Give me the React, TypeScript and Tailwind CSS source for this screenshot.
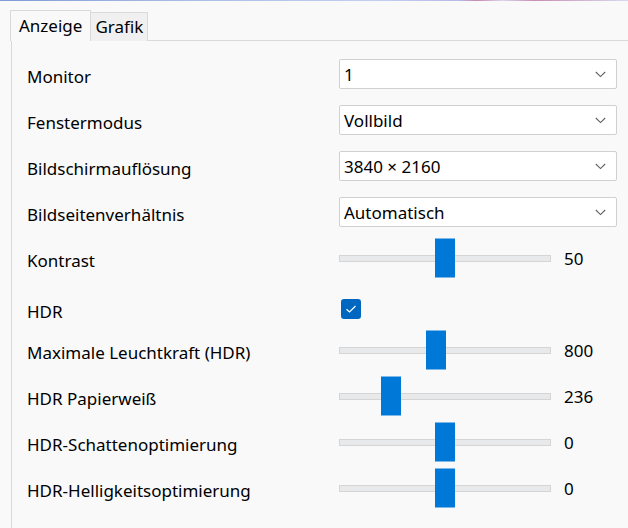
import React from 'react'

const FONT = "font-['Noto_Sans',_'Open_Sans',_sans-serif]"

interface ComboRow {
  kind: 'combo'
  label: string
  value: string
}

interface SliderRow {
  kind: 'slider'
  label: string
  value: string
  thumb: number // thumb left offset on the track, px
}

interface CheckRow {
  kind: 'check'
  label: string
}

type Row = ComboRow | SliderRow | CheckRow

const ROWS: Row[] = [
  { kind: 'combo', label: 'Monitor', value: '1' },
  { kind: 'combo', label: 'Fenstermodus', value: 'Vollbild' },
  { kind: 'combo', label: 'Bildschirmauflösung', value: '3840 × 2160' },
  { kind: 'combo', label: 'Bildseitenverhältnis', value: 'Automatisch' },
  { kind: 'slider', label: 'Kontrast', value: '50', thumb: 95 },
  { kind: 'check', label: 'HDR' },
  { kind: 'slider', label: 'Maximale Leuchtkraft (HDR)', value: '800', thumb: 86 },
  { kind: 'slider', label: 'HDR Papierweiß', value: '236', thumb: 41 },
  { kind: 'slider', label: 'HDR-Schattenoptimierung', value: '0', thumb: 95 },
  { kind: 'slider', label: 'HDR-Helligkeitsoptimierung', value: '0', thumb: 95 },
]

function Chevron() {
  return (
    <svg width="11" height="7" viewBox="0 0 11 7" className="shrink-0">
      <path d="M0.8 1 L5.5 5.6 L10.2 1" fill="none" stroke="#606060" strokeWidth="1.1" />
    </svg>
  )
}

function Combo({ value }: { value: string }) {
  return (
    <div className="w-[278px] h-[30px] flex items-center justify-between pl-[4px] pr-[10px] bg-white border border-[#d0d0d0] rounded-[2px]">
      <span className="text-[17px] leading-none text-black">{value}</span>
      <Chevron />
    </div>
  )
}

function Slider({ value, thumb }: { value: string; thumb: number }) {
  return (
    <div className="flex items-center">
      <div className="relative w-[212px] h-[7px] bg-[#e7e9ea] border border-[#d5d5d5]">
        {/* thumb sits over the track */}
        <div
          className="absolute top-1/2 -translate-y-1/2 w-[20px] h-[39px] bg-[#0078d7]"
          style={{ left: thumb }}
        />
      </div>
      <span className="ml-[13px] text-[17px] leading-none text-black">{value}</span>
    </div>
  )
}

function Checkbox() {
  return (
    <div className="ml-[2px] w-[20px] h-[20px] rounded-[3px] bg-[#0067c0] flex items-center justify-center">
      <svg width="12" height="10" viewBox="0 0 12 10">
        <path d="M1.5 5.2 L4.5 8 L10.5 2" fill="none" stroke="white" strokeWidth="1.2" />
      </svg>
    </div>
  )
}

export default function App() {
  return (
    <div className={`${FONT} w-[628px] h-[528px] overflow-hidden bg-[#f9f9f9] text-black relative`}>
      {/* ── Desktop sliver at top ───────────────────────────── */}
      <div className="h-[1px] bg-[linear-gradient(90deg,#7f9bd6_0%,#a9bde6_30%,#c4cff0_60%,#b7b9e8_73%,#c78ab0_76%,#dcd4ec_80%,#c88fb4_85%,#d8d8ee_100%)]" />

      {/* ── Tabs ───────────────────────────────────────────── */}
      <div className="flex items-end h-[31px] pl-[10px] mt-[9px] -mb-[1px]">
        <div className="h-[31px] px-[8px] pt-[2px] border border-b-0 border-[#d9d9d9] bg-[#f9f9f9] text-[17px] relative z-10 flex items-start">
          Anzeige
        </div>
        <div className="h-[29px] px-[4px] border border-l-0 border-b-0 border-[#dadada] bg-[#f0f0f0] text-[17px] leading-[28px]">
          Grafik
        </div>
        <div className="flex-1" />
      </div>

      {/* ── Pane ───────────────────────────────────────────── */}
      <div className="ml-[11px] border-l border-t border-[#dadada] pt-[10px] pl-[15px] h-[490px]">
        {ROWS.map(row => (
          <div
            key={row.label}
            className={`flex h-[46px] items-center ${row.kind === 'check' ? 'pt-[10px]' : ''}`}
          >
            <div className="w-[312px] text-[17px] leading-none pt-[5px]">{row.label}</div>
            {row.kind === 'combo' && <Combo value={row.value} />}
            {row.kind === 'slider' && <Slider value={row.value} thumb={row.thumb} />}
            {row.kind === 'check' && <Checkbox />}
          </div>
        ))}
      </div>
    </div>
  )
}
